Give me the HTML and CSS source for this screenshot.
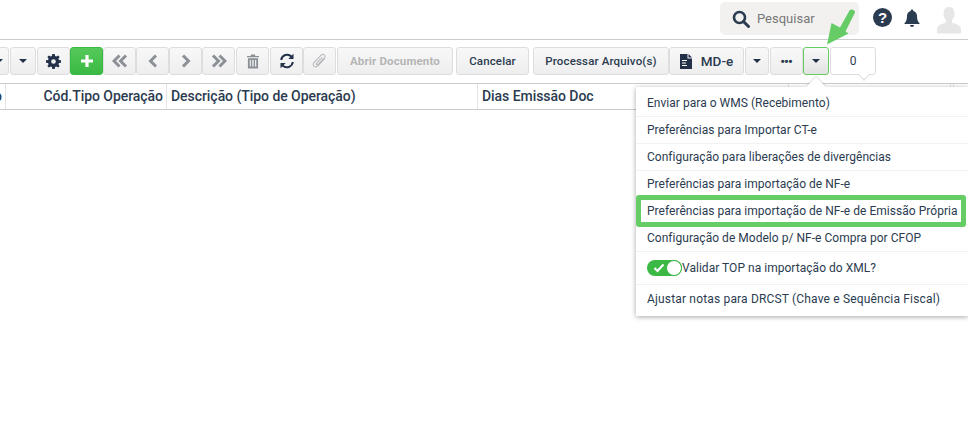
FILE: index.html
```html
<!DOCTYPE html>
<html lang="pt-BR">
<head>
<meta charset="utf-8">
<title>Tipos de Operação</title>
<link rel="stylesheet" href="styles.css">
</head>
<body>
<div class="page">
  <header class="topbar">
    <div class="search">
      <svg class="search-icon" viewBox="0 0 18 18" width="18" height="18"><circle cx="7.500" cy="7.500" r="5.500" fill="none" stroke="#2b3b50" stroke-width="2.600"/><path d="M11.500 11.500L16.500 16.500" stroke="#2b3b50" stroke-width="3" stroke-linecap="round"/></svg>
      <span class="search-text">Pesquisar</span>
    </div>
    <div class="help">?</div>
    <svg class="bell" viewBox="0 0 16 18" width="16" height="18"><path d="M8 0.500a1.300 1.300 0 0 1 1.300 1.400C12 2.500 13 4.600 13 7c0 4 1 5.500 2.500 7.200v.8H.5v-.8C2 12.500 3 11 3 7c0-2.400 1-4.500 3.700-5.100A1.300 1.300 0 0 1 8 .5z" fill="#2b3b50"/><path d="M6 16a2 2 0 0 0 4 0z" fill="#2b3b50"/></svg>
    <svg class="avatar" viewBox="0 0 24 28" width="24" height="28"><path d="M12 1c3.500 0 5.500 2.700 5.500 6.500 0 2.700-1 5-2.500 6.500v2.500c3 1.200 9 2.500 9 6.500v4.500H0V23c0-4 6-5.300 9-6.500V14c-1.500-1.500-2.500-3.800-2.500-6.500C6.500 3.700 8.500 1 12 1z" fill="#e6e6e6"/></svg>
  </header>

  <div class="toolbar">
    <button class="btn partial"><span class="caret"></span></button>
    <button class="btn w-caret"><span class="caret"></span></button>
    <button class="btn w-icon sep">
      <svg viewBox="0 0 16 16" width="15" height="15"><path fill="#22304a" d="M6.700 0h2.600l.4 2.200 1.300.55L12.900 1.500l1.600 1.600-1.250 1.900.55 1.300 2.200.4v2.600l-2.200.4-.55 1.300 1.250 1.900-1.600 1.600-1.900-1.250-1.300.55-.4 2.200H6.700l-.4-2.200-1.300-.55-1.900 1.250-1.600-1.600 1.250-1.900-.55-1.300L0 9.300V6.700l2.200-.4.55-1.300L1.500 3.100l1.600-1.600L5 2.750l1.300-.55zM8 5.500a2.500 2.500 0 1 0 0 5 2.500 2.500 0 0 0 0-5z"/></svg>
    </button>
    <button class="btn w-icon btn-add">
      <svg viewBox="0 0 14 14" width="14" height="14"><path d="M7 1v12M1 7h12" stroke="#fff" stroke-width="3.200"/></svg>
    </button>
    <button class="btn w-icon"><svg viewBox="0 0 16 14" width="16" height="14"><path d="M7.500 1.500L2 7l5.500 5.500M14 1.500L8.500 7l5.500 5.500" fill="none" stroke="#8b8f96" stroke-width="3"/></svg></button>
    <button class="btn w-icon"><svg viewBox="0 0 10 14" width="10" height="14"><path d="M8 1.500L2.500 7 8 12.500" fill="none" stroke="#8b8f96" stroke-width="3"/></svg></button>
    <button class="btn w-icon"><svg viewBox="0 0 10 14" width="10" height="14"><path d="M2 1.500L7.500 7 2 12.500" fill="none" stroke="#8b8f96" stroke-width="3"/></svg></button>
    <button class="btn w-icon"><svg viewBox="0 0 16 14" width="16" height="14"><path d="M2 1.500L7.500 7 2 12.500M8.500 1.500L14 7l-5.500 5.500" fill="none" stroke="#8b8f96" stroke-width="3"/></svg></button>
    <button class="btn w-icon gap-l"><svg viewBox="0 0 13 15" width="12" height="15"><path fill="#8b8f96" d="M4.500 0h4l.6 1.500H13V3H0V1.500h3.900zM1 4h11v11H1zm2 2v7h1.200V6zm2.700 0v7h1.500V6zm3 0v7H10V6z"/></svg></button>
    <button class="btn w-icon gap-l"><svg viewBox="0 0 16 16" width="16" height="16"><path d="M2.200 7A6 6 0 0 1 12.400 3.500M13.800 9A6 6 0 0 1 3.600 12.500" fill="none" stroke="#22304a" stroke-width="2"/><path d="M14.500 0.800v5.200H9.300zM1.500 15.200V10h5.200z" fill="#22304a"/></svg></button>
    <button class="btn w-icon"><svg viewBox="0 0 16 16" width="15" height="16"><path d="M13.500 5.500L6.500 13c-1.500 1.600-3.500 1.600-4.500.6s-1-2.800.5-4.400L9.800 1.800c1-1 2.500-1.100 3.400-.2s.8 2.300-.2 3.300L6.500 11.500c-.6.600-1.300.7-1.700.3s-.3-1.100.3-1.700L11 4" fill="none" stroke="#b5b8bc" stroke-width="1.100"/></svg></button>
    <button class="btn w-open" disabled>Abrir Documento</button>
    <button class="btn w-cancel">Cancelar</button>
    <button class="btn w-process">Processar Arquivo(s)</button>
    <button class="btn w-mde">
      <svg viewBox="0 0 12 15" width="12" height="15"><path fill="#22304a" d="M0 0h7.500v4.500H12V15H0zM8.500 0L12 3.500H8.500z"/><path d="M2 6.500h5M2 9h4M2 11.500h5" stroke="#fff" stroke-width="1"/></svg>
      <span>MD-e</span>
    </button>
    <button class="btn w-caret2"><span class="caret"></span></button>
    <button class="btn w-more"><span class="dots">•••</span></button>
    <button class="btn w-caret-on"><span class="caret"></span></button>
    <div class="counter">0</div>
  </div>

  <div class="grid-head">
    <div class="col c0"><span class="clipped">o</span></div>
    <div class="col c1">Cód.Tipo Operação</div>
    <div class="col c2">Descrição (Tipo de Operação)</div>
    <div class="col c3">Dias Emissão Doc</div>
    <div class="col c4"></div>
    <div class="col c5"></div>
    <div class="col c6"></div>
  </div>

  <span class="counter-tip"></span>
  <div class="menu">
    <span class="menu-tip"></span>
    <div class="menu-item">Enviar para o WMS (Recebimento)</div>
    <div class="menu-item">Preferências para Importar CT-e</div>
    <div class="menu-item">Configuração para liberações de divergências</div>
    <div class="menu-item">Preferências para importação de NF-e</div>
    <div class="menu-item">Preferências para importação de NF-e de Emissão Própria</div>
    <div class="menu-item">Configuração de Modelo p/ NF-e Compra por CFOP</div>
    <div class="menu-item item-toggle">
      <span class="toggle">
        <svg viewBox="0 0 12 10" width="12" height="10"><path d="M1.500 5l3 3 6-6.500" fill="none" stroke="#fff" stroke-width="2.200"/></svg>
        <span class="knob"></span>
      </span>
      <span>Validar TOP na importação do XML?</span>
    </div>
    <div class="menu-item wide">Ajustar notas para DRCST (Chave e Sequência Fiscal)</div>
  </div>
  <div class="mark"></div>
  <svg class="arrow" viewBox="0 0 40 46" width="40" height="46"><path d="M7 39.500L11.500 18 20 22.500 29.500 5.500c1-1.800 5.800-1 5.500 2L25.500 26.500 28.500 28.500z" fill="#66cc66"/></svg>
</div>
</body>
</html>
```
FILE: styles.css
```css
* { box-sizing: border-box; }
html, body { margin: 0; padding: 0; background: #fff; }
body { font-family: Roboto, "Liberation Sans", sans-serif; color: #2b3b50; }
.page { position: relative; width: 968px; height: 423px; overflow: hidden; }

.topbar { height: 40px; border-bottom: 1px solid #ccc; display: flex; align-items: flex-start; padding: 2px 0 0 720px; }
.search { width: 139px; height: 33px; background: #f2f1f0; border-radius: 5px; display: flex; align-items: center; padding-left: 12px; gap: 7px; }
.search-icon { flex: none; }
.search-text { font-size: 13px; color: #777; }
.help { width: 19px; height: 19px; margin: 6px 0 0 14px; border-radius: 50%; background: #2b3b50; color: #fff; font: 700 15px/19px "Liberation Sans", sans-serif; text-align: center; }
.bell { margin: 7px 0 0 12px; }
.avatar { margin: 4px 0 0 17px; }

.toolbar { margin-top: 7px; height: 28px; display: flex; justify-content: flex-end; padding-right: 92px; overflow: hidden; }
.btn { flex: none; height: 28px; padding: 0; margin: 0; display: flex; align-items: center; justify-content: center; gap: 9px; border: 1px solid #ddd; border-radius: 3px; background: linear-gradient(#f8f8f8, #eeeeee); color: #2b3b50; font: 500 11.500px Roboto, "Liberation Sans", sans-serif; letter-spacing: .15px; }
.partial { width: 20px; margin-right: 1px; }
.w-caret { width: 26px; }
.sep { margin-left: 1px; }
.w-icon { width: 33px; }
.gap-l { margin-left: 1px; }
.btn-add { background: linear-gradient(#55c95a, #3bb944); border-color: #3bb944; }
.w-open { width: 116px; margin-left: 1px; color: #b5b5b5; font-weight: 700; }
.w-cancel { width: 73px; margin-left: 3px; }
.w-process { width: 136px; margin-left: 4px; }
.w-mde { width: 75px; font-size: 13.500px; letter-spacing: 0; }
.w-caret2 { width: 24px; margin-left: 1px; }
.w-more { width: 33px; margin-left: 1px; }
.dots { font-size: 11px; font-weight: 700; letter-spacing: 0; font-family: "Liberation Sans", sans-serif; }
.w-caret-on { width: 26px; border-color: #66cc66; background: linear-gradient(#f8f8f8, #e2e2e2); }
.counter { flex: none; width: 46px; height: 28px; margin-left: 1px; border: 1px solid #ddd; border-radius: 3px; background: #fff; display: flex; align-items: center; justify-content: center; font-size: 12px; }
.caret { width: 0; height: 0; border-left: 4px solid transparent; border-right: 4px solid transparent; border-top: 4px solid #22304a; }

.grid-head { margin-top: 8px; height: 27px; border-top: 1px solid #ccc; border-bottom: 1px solid #ccc; display: flex; font-size: 14px; font-weight: 500; letter-spacing: -.05px; }
.col { flex: none; height: 25px; border-right: 1px solid #e4e4e4; line-height: 25px; white-space: nowrap; overflow: hidden; }
.c0 { width: 6px; }
.clipped { display: block; margin-left: -6px; }
.c1 { width: 161px; text-align: right; padding-right: 3px; }
.c2 { width: 311px; padding-left: 4px; }
.c3 { width: 311px; padding-left: 4px; }
.c4 { width: 162px; }
.c5 { width: 3px; }
.c6 { width: 14px; border-right: 0; }

.counter-tip { position: absolute; left: 860px; top: 71px; width: 8px; height: 8px; background: #fff; border-right: 1px solid #ddd; border-bottom: 1px solid #ddd; transform: rotate(45deg); }
.menu { position: absolute; left: 636px; top: 87px; width: 332px; height: 229px; background: #fff; box-shadow: 0 1px 5px rgba(0, 0, 0, .35); padding-top: 3px; }
.menu-tip { position: absolute; left: 173px; top: -7px; width: 14px; height: 14px; background: #fff; box-shadow: -1px -1px 1px rgba(0, 0, 0, .12); transform: rotate(45deg); }
.menu-item { position: relative; height: 27px; padding-left: 11px; display: flex; align-items: center; border-bottom: 1px solid #f2f2f2; font-size: 12px; letter-spacing: .03px; white-space: nowrap; }
.item-toggle { height: 33px; }
.menu-item:last-child { border-bottom: 0; height: 27px; }
.wide { letter-spacing: .17px; }
.toggle { width: 35px; height: 16px; border-radius: 8px; background: #3bb944; position: relative; display: inline-flex; align-items: center; padding-left: 6px; flex: none; }
.knob { position: absolute; right: 0; top: 0; width: 16px; height: 16px; border-radius: 50%; background: #fff; border: 1px solid #3bb944; }
.mark { position: absolute; left: 636px; top: 195px; width: 330px; height: 32px; border: 5px solid #66cc66; border-radius: 3px; }
.arrow { position: absolute; left: 820px; top: 5px; }
```
